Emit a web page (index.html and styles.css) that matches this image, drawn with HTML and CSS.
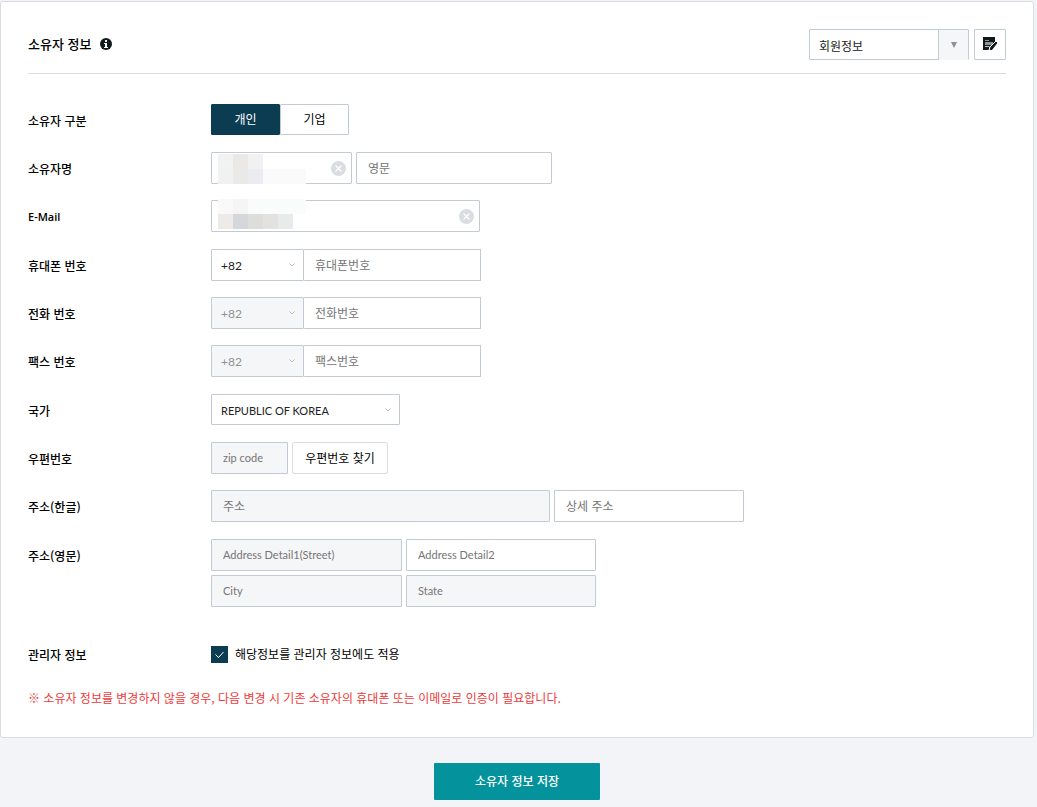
FILE: index.html
```
<!DOCTYPE html>
<html lang="ko">
<head>
    <meta charset="UTF-8">
    <meta name="viewport" content="width=device-width, initial-scale=1">
    <title>소유자 정보</title>
    <link rel="stylesheet" href="styles.css">
</head>
<body>
    <form id="ownerForm" action="#" method="post">
        <section class="card">
            <div class="card-header">
                <h1>소유자 정보</h1>
                <svg class="info-icon" viewBox="0 0 12 12" role="img" aria-label="도움말">
                    <circle cx="6" cy="6" r="6" fill="#101a1c"/>
                    <path d="M5 2h2v2H5zM4 5h3v4h1v1H4V9h1V6H4z" fill="#fff"/>
                </svg>
                <div class="header-tools">
                    <div class="select-box profile-select">
                        <select id="profile" name="profile" aria-label="정보 선택">
                            <option>회원정보</option>
                        </select>
                        <span class="profile-arrow"><svg viewBox="0 0 6 6"><path d="M0 0h6L3 6z" fill="#8b9095"/></svg></span>
                    </div>
                    <button type="button" class="edit-btn" aria-label="수정">
                        <svg viewBox="0 0 15 14">
                            <path d="M0 0h12v5L6 10v3H0z" fill="#101a1c"/>
                            <path d="M2 3h4v1H2zM2 5h8v3H2z" fill="#8d9293"/>
                            <path d="M2 9h4v1H2z" fill="#c4c8ca"/>
                            <path d="M6 13l1-3 6-6 2 2-6 7z" fill="#101a1c" stroke="#fff" stroke-width="1"/>
                            <path d="M7 13l1-3 5-5 1 1-5 7z" fill="#101a1c"/>
                        </svg>
                    </button>
                </div>
            </div>

            <div class="group">
                <div class="row">
                    <span class="label">소유자 구분</span>
                    <div class="fields toggle">
                        <button type="button" class="on">개인</button>
                        <button type="button">기업</button>
                    </div>
                </div>
                <div class="row">
                    <label class="label" for="ownerName">소유자명</label>
                    <div class="fields">
                        <div class="clearable w-name">
                            <input type="text" id="ownerName" name="ownerName">
                            <svg class="mask mask-name" viewBox="0 0 88 30" shape-rendering="crispEdges">
                                <path d="M0 0h88v30H0z" fill="#fff"/>
                                <path d="M0 0h15v15H0z" fill="#f1f3f2"/>
                                <path d="M15 0h15v15H15z" fill="#ebe9e8"/>
                                <path d="M30 0h15v15H30zM0 15h15v15H0z" fill="#f1f1f2"/>
                                <path d="M15 15h15v15H15z" fill="#e9e9e8"/>
                                <path d="M30 15h15v15H30z" fill="#ebecf0"/>
                                <path d="M45 15h43v15H45z" fill="#fafafb"/>
                            </svg>
                            <button type="button" class="clear" aria-label="지우기">
                                <svg viewBox="0 0 15 15"><circle cx="7.5" cy="7.5" r="7.5" fill="#d9dde1"/><path d="M4.500 4.500l6 6M10.500 4.500l-6 6" stroke="#fff" stroke-width="1.200"/></svg>
                            </button>
                        </div>
                        <input type="text" class="w-name-en" name="ownerNameEn" placeholder="영문" aria-label="영문">
                    </div>
                </div>
                <div class="row">
                    <label class="label latin-label" for="email">E-Mail</label>
                    <div class="fields">
                        <div class="clearable w-email">
                            <input type="text" id="email" name="email">
                            <svg class="mask mask-email" viewBox="0 0 88 30" shape-rendering="crispEdges">
                                <path d="M0 0h88v30H0z" fill="#fff"/>
                                <path d="M0 0h15v15H0z" fill="#f9f9f9"/>
                                <path d="M15 0h15v15H15z" fill="#f5f5f6"/>
                                <path d="M30 0h58v15H30z" fill="#fafbfb"/>
                                <path d="M0 15h15v15H0z" fill="#edeae7"/>
                                <path d="M15 15h15v15H15z" fill="#d5d7da"/>
                                <path d="M30 15h15v15H30z" fill="#dddddc"/>
                                <path d="M45 15h15v15H45z" fill="#e3e2e1"/>
                                <path d="M60 15h15v15H60z" fill="#e9ebea"/>
                            </svg>
                            <button type="button" class="clear" aria-label="지우기">
                                <svg viewBox="0 0 15 15"><circle cx="7.5" cy="7.5" r="7.5" fill="#d9dde1"/><path d="M4.500 4.500l6 6M10.500 4.500l-6 6" stroke="#fff" stroke-width="1.200"/></svg>
                            </button>
                        </div>
                    </div>
                </div>
            </div>

            <div class="group">
                <div class="row">
                    <label class="label" for="mobile">휴대폰 번호</label>
                    <div class="fields phone">
                        <div class="select-box w-code">
                            <select name="mobileCode" aria-label="국가 번호"><option>+82</option></select>
                            <svg class="chevron" viewBox="0 0 6 4"><path d="M0.500 0.500L3 3l2.500-2.500"/></svg>
                        </div>
                        <input type="tel" class="w-phone" id="mobile" name="mobile" placeholder="휴대폰번호">
                    </div>
                </div>
                <div class="row">
                    <label class="label" for="tel">전화 번호</label>
                    <div class="fields phone">
                        <div class="select-box w-code">
                            <select name="telCode" aria-label="국가 번호" disabled><option>+82</option></select>
                            <svg class="chevron" viewBox="0 0 6 4"><path d="M0.500 0.500L3 3l2.500-2.500"/></svg>
                        </div>
                        <input type="tel" class="w-phone" id="tel" name="tel" placeholder="전화번호">
                    </div>
                </div>
                <div class="row">
                    <label class="label" for="fax">팩스 번호</label>
                    <div class="fields phone">
                        <div class="select-box w-code">
                            <select name="faxCode" aria-label="국가 번호" disabled><option>+82</option></select>
                            <svg class="chevron" viewBox="0 0 6 4"><path d="M0.500 0.500L3 3l2.500-2.500"/></svg>
                        </div>
                        <input type="tel" class="w-phone" id="fax" name="fax" placeholder="팩스번호">
                    </div>
                </div>
            </div>

            <div class="group">
                <div class="row">
                    <label class="label" for="country">국가</label>
                    <div class="fields">
                        <div class="select-box w-country">
                            <select id="country" class="latin" name="country"><option>REPUBLIC OF KOREA</option></select>
                            <svg class="chevron" viewBox="0 0 6 4"><path d="M0.500 0.500L3 3l2.500-2.500"/></svg>
                        </div>
                    </div>
                </div>
                <div class="row">
                    <label class="label" for="zip">우편번호</label>
                    <div class="fields">
                        <input type="text" class="w-zip latin" id="zip" name="zip" placeholder="zip code" readonly>
                        <button type="button" class="zip-btn">우편번호 찾기</button>
                    </div>
                </div>
                <div class="row">
                    <label class="label" for="addr">주소(한글)</label>
                    <div class="fields">
                        <input type="text" class="w-addr" id="addr" name="addr" placeholder="주소" readonly>
                        <input type="text" class="w-detail" name="addrDetail" placeholder="상세 주소" aria-label="상세 주소">
                    </div>
                </div>
            </div>

            <div class="group">
                <div class="row">
                    <label class="label" for="addrEn">주소(영문)</label>
                    <div class="fields address-en">
                        <input type="text" class="latin" id="addrEn" name="addrEn1" placeholder="Address Detail1(Street)" readonly>
                        <input type="text" class="latin" name="addrEn2" placeholder="Address Detail2" aria-label="Address Detail2">
                        <input type="text" class="latin" name="city" placeholder="City" aria-label="City" readonly>
                        <input type="text" class="latin" name="state" placeholder="State" aria-label="State" readonly>
                    </div>
                </div>
            </div>

            <div class="group manager">
                <div class="row">
                    <span class="label">관리자 정보</span>
                    <label class="check">
                        <input type="checkbox" name="applyManager" checked>
                        <svg viewBox="0 0 17 17"><path d="M4.500 8.500l3 3 5-5.500"/></svg>
                        <span>해당정보를 관리자 정보에도 적용</span>
                    </label>
                </div>
            </div>

            <p class="notice">※ 소유자 정보를 변경하지 않을 경우, 다음 변경 시 기존 소유자의 휴대폰 또는 이메일로 인증이 필요합니다.</p>
        </section>

        <div class="actions">
            <button type="submit" class="save-btn">소유자 정보 저장</button>
        </div>
    </form>
</body>
</html>
```
FILE: styles.css
```
* {
    box-sizing: border-box;
}
body {
    margin: 0;
    padding: 1px 3px 7px 0;
    background-color: #f3f4f8;
    color: #000;
    font-family: "Noto Sans CJK KR", sans-serif;
    font-size: 12px;
}
button,
input,
select {
    margin: 0;
    font-family: inherit;
    font-size: 12px;
    color: #000;
}
button {
    padding: 0 0 2px;
    cursor: pointer;
}
svg {
    display: block;
}

/* card */
.card {
    padding: 27px 27px 29px;
    background-color: #fff;
    border: 1px solid #d9dde3;
    border-radius: 3px;
}
.card-header {
    display: flex;
    align-items: center;
    padding-bottom: 13px;
    margin-bottom: 30px;
    border-bottom: 1px solid #d9dcdf;
}
h1 {
    margin: 0;
    padding-bottom: 2px;
    font-size: 13px;
    font-weight: 500;
    line-height: 20px;
}
.info-icon {
    width: 12px;
    height: 12px;
    margin-left: 9px;
    margin-bottom: 2px;
}
.header-tools {
    display: flex;
    gap: 5px;
    margin-left: auto;
}
.edit-btn {
    display: flex;
    align-items: center;
    justify-content: center;
    width: 32px;
    height: 31px;
    background-color: #fff;
    border: 1px solid #c2cad2;
    border-radius: 1px;
}
.edit-btn svg {
    width: 15px;
    height: 14px;
}

/* rows */
.group {
    display: flex;
    flex-direction: column;
    gap: 16px;
    margin-bottom: 17px;
}
.row {
    display: flex;
    align-items: flex-start;
    min-height: 32px;
}
.label {
    flex: none;
    width: 183px;
    padding-top: 2px;
    font-weight: 500;
    line-height: 30px;
}
.fields {
    display: flex;
    gap: 4px;
}

/* inputs */
input[type="text"],
input[type="tel"] {
    height: 32px;
    padding: 0 11px 1px;
    background-color: #fff;
    border: 1px solid #c2cad4;
    border-radius: 1px;
    outline: none;
}
input[readonly] {
    background-color: #f5f6f8;
}
input::placeholder {
    color: #757575;
}
.select-box {
    position: relative;
}
select {
    appearance: none;
    display: block;
    width: 100%;
    height: 31px;
    padding: 2px 9px 0;
    background-color: #fff;
    border: 1px solid #c2cad4;
    border-radius: 1px;
    color: #222;
}
.phone select {
    height: 32px;
    padding-top: 0;
    font-family: Lato, sans-serif;
}
select:disabled {
    background-color: #f5f6f8;
    color: #8f9193;
    opacity: 1;
}
input.latin,
select.latin {
    font-family: Lato, sans-serif;
    font-size: 11px;
}
.latin-label {
    font-family: "Open Sans", sans-serif;
    font-size: 11px;
    font-weight: 600;
}
.chevron {
    position: absolute;
    top: 14px;
    right: 9px;
    width: 6px;
    height: 4px;
    fill: none;
    stroke: #b8bcc0;
    pointer-events: none;
}
.profile-select {
    width: 160px;
}
.profile-arrow {
    position: absolute;
    top: 1px;
    right: 1px;
    bottom: 0;
    display: flex;
    align-items: center;
    justify-content: center;
    width: 30px;
    background-color: #f5f6f8;
    border-left: 1px solid #c2cad4;
    pointer-events: none;
}
.profile-arrow svg {
    width: 6px;
    height: 6px;
}
.clearable {
    position: relative;
}
.clearable input {
    width: 100%;
}
.clear {
    position: absolute;
    top: 9px;
    right: 6px;
    width: 15px;
    height: 15px;
    padding: 0;
    background: none;
    border: none;
}
.mask {
    position: absolute;
    left: 7px;
    width: 88px;
    height: 30px;
    pointer-events: none;
}
.mask-name {
    top: 2px;
}
.mask-email {
    top: -1px;
}

/* owner type */
.toggle {
    gap: 0;
}
.toggle button {
    width: 69px;
    height: 31px;
    background-color: #fff;
    border: 1px solid #c2cad4;
    border-radius: 1px;
}
.toggle .on {
    background-color: #0b3c52;
    border-color: #0b3c52;
    color: #fff;
}

/* widths */
.w-name {
    width: 141px;
}
.w-name-en {
    width: 196px;
}
.w-email {
    width: 269px;
}
.w-code {
    width: 93px;
}
.phone {
    gap: 0;
}
.w-phone {
    width: 177px;
}
input.w-phone {
    border-left: none;
}
.w-country {
    width: 189px;
}
.w-zip {
    width: 77px;
}
.w-addr {
    width: 339px;
}
.w-detail {
    width: 190px;
}
.address-en {
    display: grid;
    grid-template-columns: 191px 190px;
}
.zip-btn {
    width: 96px;
    height: 32px;
    background-color: #fff;
    border: 1px solid #d9dde1;
    border-radius: 2px;
}

/* manager */
.manager {
    margin-top: 31px;
    margin-bottom: 18px;
}
.check {
    position: relative;
    display: flex;
    align-items: center;
    gap: 7px;
    height: 32px;
}
.check span {
    padding-bottom: 2px;
}
.check input {
    appearance: none;
    width: 17px;
    height: 17px;
    background-color: #fff;
    border: 1px solid #c2cad4;
}
.check input:checked {
    background-color: #0b3c52;
    border-color: #0b3c52;
}
.check svg {
    position: absolute;
    left: 0;
    width: 17px;
    height: 17px;
    fill: none;
    stroke: #fff;
    pointer-events: none;
}
.notice {
    margin: 0;
    color: #ee3a3a;
    line-height: 20px;
}
.actions {
    display: flex;
    justify-content: center;
    margin-top: 25px;
}
.save-btn {
    width: 166px;
    height: 37px;
    background-color: #04939d;
    border: none;
    border-radius: 1px;
    color: #fff;
    font-weight: 500;
}
```
